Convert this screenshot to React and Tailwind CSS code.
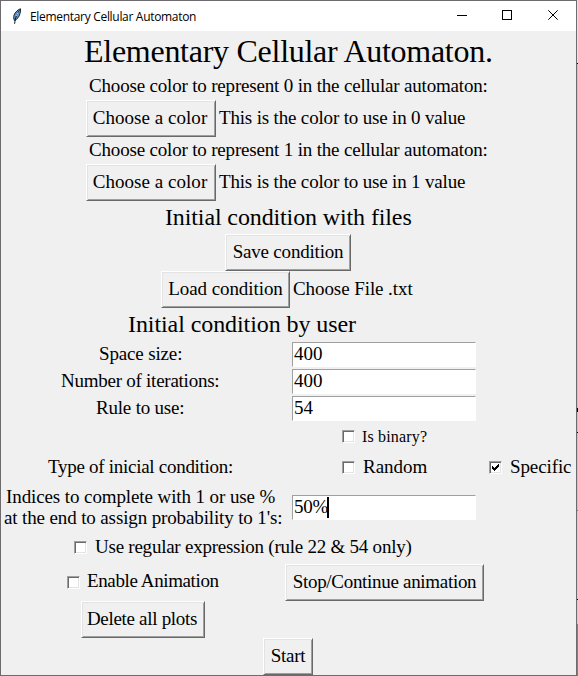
import React from "react";

function Button({ className = "", children }) {
  return (
    <button
      type="button"
      className={`h-[37px] shrink-0 whitespace-nowrap border border-t-white border-l-white border-r-[#696969] border-b-[#696969] bg-[#f0f0f0] pb-[2px] text-center leading-[21px] shadow-[inset_1px_1px_0_#e3e3e3,inset_-1px_-1px_0_#a0a0a0] ${className}`}
    >
      {children}
    </button>
  );
}

function Entry({ children }) {
  return (
    <div className="flex h-[25px] w-[184px] shrink-0 items-center border border-t-[#a0a0a0] border-l-[#a0a0a0] border-r-white border-b-white bg-white pl-px">
      {children}
    </div>
  );
}

function Check({ checked }) {
  return (
    <span
      role="checkbox"
      aria-checked={!!checked}
      className="flex size-[13px] shrink-0 border border-t-[#a0a0a0] border-l-[#a0a0a0] border-r-white border-b-white bg-white shadow-[inset_1px_1px_0_#696969,inset_-1px_-1px_0_#e3e3e3]"
    >
      {checked && (
        <svg viewBox="0 0 11 11" className="size-[11px]" shapeRendering="crispEdges">
          <path d="M2 4h1v1h1v1h1v-1h1v-1h1v-1h1v-1h1v3h-1v1h-1v1h-1v1h-1v1h-1v-1h-1v-1h-1z" fill="#000" />
        </svg>
      )}
    </span>
  );
}

function Feather() {
  return (
    <svg width="10" height="17" viewBox="0 0 10 17" className="ml-[11px] shrink-0">
      <path d="M8.5.8C6.2 1.3 3.1 4.2 2 7.2c-.5 2-.3 3.5.4 5.3C5 11.6 7.4 8.600 8 5.500c.4-1.800.6-3.200.5-4.700z" fill="#5b9bd5" stroke="#17202a" strokeWidth="1" />
      <path d="M7.300 2.500C5 5.500 3.500 9 2.600 15.800" fill="none" stroke="#111" strokeWidth="1" />
      <path d="M6 4.500 4.200 8" stroke="#c9e2f7" strokeWidth=".8" />
    </svg>
  );
}

function Text({ className = "", children }) {
  return <span className={`shrink-0 whitespace-pre ${className}`}>{children}</span>;
}

export default function App() {
  return (
    <div className="flex h-[676px] w-[578px] overflow-hidden bg-[#c8c8c8] text-black">
      <div className="flex h-[676px] w-[577px] shrink-0 flex-col border border-[#6e6b6e] bg-[#f0f0f0] font-['Liberation_Serif','Times_New_Roman',serif] text-[19px] leading-[21px]">
        <header className="flex h-[30px] shrink-0 items-center bg-white">
          <Feather />
          <Text className="ml-[8px] font-['Open_Sans','Noto_Sans',sans-serif] text-[12px] tracking-[-0.31px]">Elementary Cellular Automaton</Text>
          <svg width="108" height="10" viewBox="0 0 108 10" className="mr-[15px] mb-[2px] ml-auto" fill="none" stroke="#000">
            <path d="M4 5.500h10M49.500.5h9v9h-9z" shapeRendering="crispEdges" />
            <path d="m95.300.3 9.400 9.400m0-9.400-9.400 9.400" />
          </svg>
        </header>
        <h1 className="flex h-[43px] shrink-0 items-center pb-[3px] pl-[83px] text-[32px] leading-[36px] tracking-[-0.27px]">
          <Text>Elementary Cellular Automaton.</Text>
        </h1>
        <div className="flex h-[26px] shrink-0 items-center pb-[3px] pl-[88px] tracking-[-0.18px]">
          <Text>Choose color to represent 0 in the cellular automaton:</Text>
        </div>
        <div className="flex h-[37px] shrink-0 items-center pl-[85px]">
          <Button className="w-[130px] pr-[2px] tracking-[0.04px]">Choose a color</Button>
          <Text className="ml-[3px] pb-[2px] tracking-[-0.17px]">This is the color to use in 0 value</Text>
        </div>
        <div className="flex h-[27px] shrink-0 items-center pb-[2px] pl-[88px] tracking-[-0.18px]">
          <Text>Choose color to represent 1 in the cellular automaton:</Text>
        </div>
        <div className="flex h-[37px] shrink-0 items-center pl-[85px]">
          <Button className="w-[130px] pr-[2px] tracking-[0.04px]">Choose a color</Button>
          <Text className="ml-[3px] pb-[2px] tracking-[-0.17px]">This is the color to use in 1 value</Text>
        </div>
        <h2 className="flex h-[33px] shrink-0 items-center pl-[164px] text-[24px] leading-[27px] tracking-[-0.12px]">
          <Text>Initial condition with files</Text>
        </h2>
        <div className="flex h-[37px] shrink-0 items-center pl-[224px]">
          <Button className="w-[126px] tracking-[-0.2px]">Save condition</Button>
        </div>
        <div className="flex h-[37px] shrink-0 items-center pl-[160px]">
          <Button className="w-[129px] tracking-[-0.07px]">Load condition</Button>
          <Text className="ml-[3px] pb-[2px] tracking-[-0.08px]">Choose File .txt</Text>
        </div>
        <h2 className="flex h-[33px] shrink-0 items-center pl-[127px] text-[24px] leading-[27px] tracking-[-0.08px]">
          <Text>Initial condition by user</Text>
        </h2>
        <div className="flex h-[27px] shrink-0 items-center">
          <Text className="w-[291px] pb-[2px] pl-[98px] tracking-[-0.15px]">Space size:</Text>
          <Entry><Text className="pb-[2px]">400</Text></Entry>
        </div>
        <div className="flex h-[27px] shrink-0 items-center">
          <Text className="w-[291px] pb-[2px] pl-[60px] tracking-[-0.25px]">Number of iterations:</Text>
          <Entry><Text className="pb-[2px]">400</Text></Entry>
        </div>
        <div className="flex h-[27px] shrink-0 items-center">
          <Text className="w-[291px] pb-[2px] pl-[95px] tracking-[-0.2px]">Rule to use:</Text>
          <Entry><Text className="pb-[2px]">54</Text></Entry>
        </div>
        <div className="flex h-[29px] shrink-0 items-center pl-[341px] text-[16px]">
          <Check />
          <Text className="ml-[7px] tracking-[0.17px]">Is binary?</Text>
        </div>
        <div className="flex h-[33px] shrink-0 items-center">
          <Text className="w-[341px] pb-[2px] pl-[47px] tracking-[-0.28px]">Type of inicial condition:</Text>
          <Check />
          <Text className="ml-[8px] w-[126px] pb-[2px]">Random</Text>
          <Check checked />
          <Text className="ml-[8px] pb-[2px] tracking-[-0.1px]">Specific</Text>
        </div>
        <div className="flex h-[47px] shrink-0 items-center">
          <div className="flex w-[291px] flex-col pb-[2px]">
            <Text className="pl-[5px] tracking-[-0.1px]">Indices to complete with 1 or use %</Text>
            <Text className="pl-[3px] tracking-[-0.13px]">at the end to assign probability to 1's:</Text>
          </div>
          <Entry>
            <Text className="w-[33px] pb-[2px] tracking-[-0.3px]">50%</Text>
            <span className="h-[21px] w-[2px] bg-black" />
          </Entry>
        </div>
        <div className="flex h-[33px] shrink-0 items-center pl-[73px]">
          <Check />
          <Text className="ml-[8px] pb-[2px] tracking-[-0.24px]">Use regular expression (rule 22 &amp; 54 only)</Text>
        </div>
        <div className="flex h-[37px] shrink-0 items-center pl-[66px]">
          <Check />
          <Text className="ml-[7px] w-[198px] pb-[4px] tracking-[-0.38px]">Enable Animation</Text>
          <Button className="w-[199px] tracking-[-0.3px]">Stop/Continue animation</Button>
        </div>
        <div className="flex h-[37px] shrink-0 items-center pl-[80px]">
          <Button className="w-[124px] pr-[2px] tracking-[-0.3px]">Delete all plots</Button>
        </div>
        <div className="flex h-[37px] shrink-0 items-center pl-[262px]">
          <Button className="w-[50px] tracking-[-0.3px]">Start</Button>
        </div>
      </div>
      <div className="flex w-px shrink-0 flex-col">
        <span className="h-[63px] shrink-0 bg-[#e4e4e4]" />
        <span className="h-px shrink-0 bg-black" />
        <span className="h-[344px] shrink-0 bg-[#c4c4c4]" />
        <span className="h-[4px] shrink-0 bg-black" />
        <span className="h-[20px] shrink-0 bg-[#c4c4c4]" />
        <span className="h-px shrink-0 bg-black" />
        <span className="h-[77px] shrink-0 bg-[#c4c4c4]" />
        <span className="h-px shrink-0 bg-[#808080]" />
        <span className="h-[88px] shrink-0 bg-[#d0d0d0]" />
        <span className="h-px shrink-0 bg-black" />
        <span className="h-[24px] shrink-0 bg-[#d0d0d0]" />
        <span className="h-[52px] shrink-0 bg-[#b8780b]" />
      </div>
    </div>
  );
}
